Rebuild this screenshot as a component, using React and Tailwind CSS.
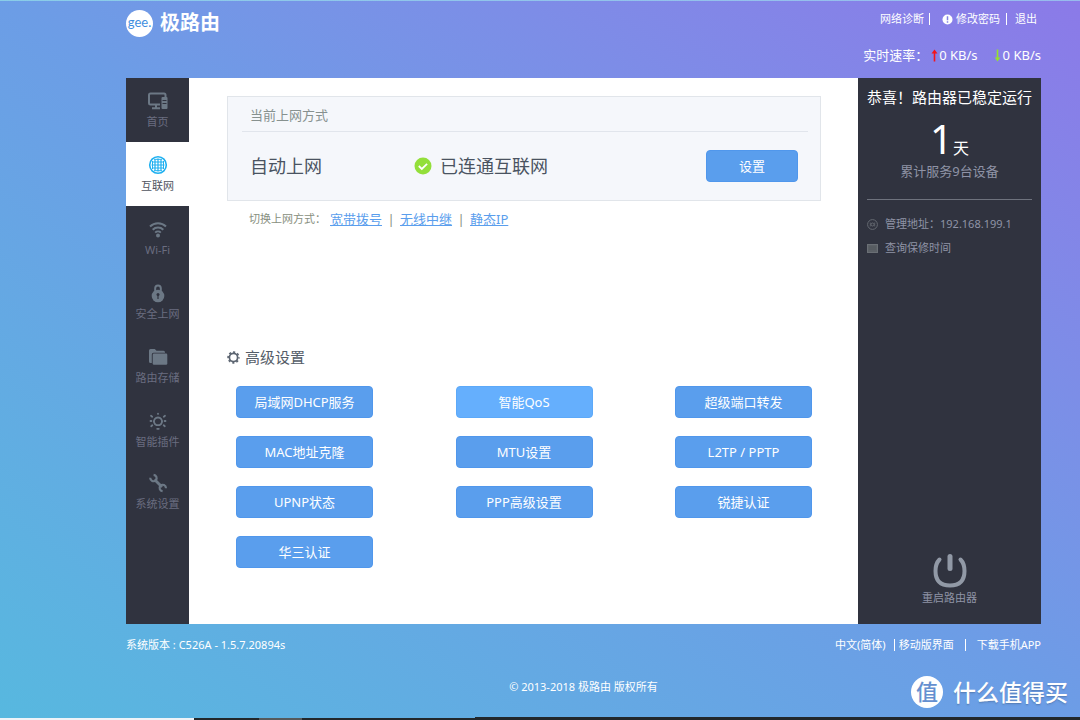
import React from "react";

function MonitorIcon() {
  return (
    <svg width="22" height="20" viewBox="0 0 22 20" fill="none" stroke="currentColor" strokeWidth="2">
      <path d="M13 13.5H3.5A1.500 1.500 0 0 1 2 12V4a1.500 1.500 0 0 1 1.500-1.500H17A1.500 1.500 0 0 1 18.500 4v2" />
      <path d="M9 13.500V17M5 17.200h8" />
      <rect x="14.500" y="6" width="6" height="12" rx="1" fill="currentColor" stroke="none" />
      <path d="M15.500 9.500h4M15.500 12.500h4" stroke="#30333f" strokeWidth="1" />
    </svg>
  );
}

function GlobeIcon() {
  return (
    <svg width="20" height="20" viewBox="0 0 20 20" fill="none" stroke="currentColor">
      <circle cx="10" cy="10" r="8.300" strokeWidth="1.600" />
      <path d="M10 3.500v13M3.500 10h13M4.500 7h11M4.500 13h11M7 4.500v11M13 4.500v11" strokeWidth="1.200" />
      <path d="M4.500 6v8M15.500 6v8M6 4.300h8M6 15.700h8" strokeWidth="1" />
    </svg>
  );
}

function WifiIcon() {
  return (
    <svg width="20" height="20" viewBox="0 0 20 20" fill="none" stroke="currentColor" strokeWidth="2">
      <path d="M2 7.500a11.500 11.500 0 0 1 16 0" />
      <path d="M4.700 10.700a7.600 7.600 0 0 1 10.600 0" />
      <path d="M7.200 13.600a4 4 0 0 1 5.600 0" />
      <circle cx="10" cy="16.500" r="2" fill="currentColor" stroke="none" />
    </svg>
  );
}

function LockIcon() {
  return (
    <svg width="20" height="20" viewBox="0 0 20 20" fill="none">
      <path d="M7.200 9V5.300a2.800 2.800 0 0 1 5.600 0V9" stroke="currentColor" strokeWidth="2" />
      <circle cx="10" cy="13" r="6.300" fill="currentColor" />
      <circle cx="10" cy="11.500" r="1.500" fill="#30333f" />
      <path d="M9.400 11.500h1.200v4.400H9.400z" fill="#30333f" />
    </svg>
  );
}

function FoldersIcon() {
  return (
    <svg width="20" height="20" viewBox="0 0 20 20" fill="currentColor">
      <path d="M1 3.500A1.500 1.500 0 0 1 2.500 2h4.300l1.700 1.800h7A1.500 1.500 0 0 1 17 5.300v.4H5.500A1.700 1.700 0 0 0 3.800 7.400V16H2.500A1.500 1.500 0 0 1 1 14.500z" />
      <rect x="4.700" y="6.600" width="14.600" height="11.200" rx="1.300" />
    </svg>
  );
}

function BulbIcon() {
  return (
    <svg width="20" height="20" viewBox="0 0 20 20" fill="none" stroke="currentColor" strokeWidth="1.800" strokeLinecap="round">
      <path d="M8.500 14.200a4 4 0 1 1 3 0z" />
      <path d="M9.200 17.800h1.600M10 2.600v.3M3 4.800l1.200.9M17 4.800l-1.200.9M2.500 10h.9M17.500 10h-.9M3.200 15.200l1.100-.9M16.800 15.200l-1.100-.9" />
    </svg>
  );
}

function WrenchIcon() {
  return (
    <svg width="20" height="20" viewBox="0 0 20 20" fill="none" stroke="currentColor">
      <path d="M6.500 6.500l7.500 7.500" strokeWidth="2.800" />
      <path d="M2.200 4.800a3.400 3.400 0 0 0 5.600 2.600A3.400 3.400 0 0 0 5.600 1.800" strokeWidth="2.200" />
      <path d="M18 15.200a3.400 3.400 0 0 0-5.600-2.600a3.400 3.400 0 0 0 2.200 5.600" strokeWidth="2.200" />
    </svg>
  );
}

function GearIcon() {
  return (
    <svg width="13" height="13" viewBox="0 0 13 13" fill="none" stroke="#5b6470">
      <circle cx="6.500" cy="6.500" r="4.100" strokeWidth="1.700" />
      <circle cx="6.500" cy="6.500" r="5.400" strokeWidth="1.600" strokeDasharray="2.120 2.120" strokeDashoffset="1.060" />
    </svg>
  );
}

function AlertIcon() {
  return (
    <svg width="11" height="11" viewBox="0 0 11 11">
      <circle cx="5.500" cy="5.500" r="5" fill="#fff" />
      <path d="M5.500 2.300v3.900M5.500 7.300v1.400" stroke="#7f80e4" strokeWidth="1.500" />
    </svg>
  );
}

function ArrowUp() {
  return (
    <svg width="7" height="13" viewBox="0 0 7 13">
      <path d="M3.500 0.500L6.500 4.500H4.300V12.500H2.700V4.500H0.500z" fill="#f5131b" />
    </svg>
  );
}

function ArrowDown() {
  return (
    <svg width="7" height="13" viewBox="0 0 7 13">
      <path d="M3.500 12.500L0.700 8.500H2.700V0.500H4.300V8.500H6.300z" fill="#95e02f" />
    </svg>
  );
}

const NAV = [
  { label: "首页", Icon: MonitorIcon },
  { label: "互联网", Icon: GlobeIcon, active: true },
  { label: "Wi-Fi", Icon: WifiIcon },
  { label: "安全上网", Icon: LockIcon },
  { label: "路由存储", Icon: FoldersIcon },
  { label: "智能插件", Icon: BulbIcon },
  { label: "系统设置", Icon: WrenchIcon },
];

const ADVANCED = [
  "局域网DHCP服务",
  "智能QoS",
  "超级端口转发",
  "MAC地址克隆",
  "MTU设置",
  "L2TP / PPTP",
  "UPNP状态",
  "PPP高级设置",
  "锐捷认证",
  "华三认证",
];

function Header() {
  return (
    <header className="flex h-[77px] justify-between pt-2 text-white">
      <a href="#home" className="flex h-7 items-center gap-[7px]">
        <span className="flex size-[27px] items-center justify-center rounded-full bg-white pb-0.5 font-['Lato'] text-[13px] leading-3 text-[#3f8fe0]">
          gee.
        </span>
        <span className="text-xl leading-7 font-bold">极路由</span>
      </a>
      <div className="flex flex-col items-end gap-4">
        <nav className="flex h-5 items-center pr-1 text-[11px] leading-5">
          <a href="#diagnose">网络诊断</a>
          <span className="ml-[5px] h-3 w-px bg-white" />
          <a href="#password" className="ml-3 flex items-center gap-[3px]">
            <AlertIcon />
            修改密码
          </a>
          <span className="ml-[6px] h-3 w-px bg-white" />
          <a href="#logout" className="ml-2">退出</a>
        </nav>
        <div className="flex h-5 items-center text-[13px] leading-5">
          <span>实时速率：</span>
          <span className="ml-[3px] flex items-center gap-px">
            <ArrowUp />0 KB/s
          </span>
          <span className="ml-4 flex items-center gap-0.5">
            <ArrowDown />0 KB/s
          </span>
        </div>
      </div>
    </header>
  );
}

function Sidebar() {
  return (
    <nav className="w-[63px] shrink-0 bg-[#30333f]">
      <ul>
        {NAV.map(({ label, Icon, active }) => (
          <li key={label} className="h-16 nth-[n+6]:h-[62px]">
            <a
              href="#nav"
              className={
                active
                  ? "flex h-full flex-col items-center bg-white pt-[13px] text-[#1fb0f0]"
                  : "flex h-full flex-col items-center pt-[13px] text-[#6c7885]"
              }
            >
              <Icon />
              <span
                className={
                  active
                    ? "mt-[3px] text-[11px] leading-4 text-[#50555f]"
                    : "mt-[3px] text-[11px] leading-4 text-[#6a6d80]"
                }
              >
                {label}
              </span>
            </a>
          </li>
        ))}
      </ul>
    </nav>
  );
}

function Content() {
  return (
    <main className="min-w-0 flex-1 bg-white pt-[18px] pr-[37px] pl-[38px]">
      <section className="border border-[#e1e5ea] bg-[#f5f7fb] pr-3 pb-[18px] pl-[14px]">
        <h2 className="border-b border-[#e1e5ec] px-2 pt-2 pb-[6px] text-[13px] leading-5 text-[#87918f]">
          当前上网方式
        </h2>
        <div className="flex items-center pt-[18px] pr-[10px] pl-2 text-lg leading-8 text-[#4a5361]">
          <span className="w-[164px]">自动上网</span>
          <span className="flex items-center gap-2">
            <svg width="18" height="18" viewBox="0 0 18 18" fill="none">
              <circle cx="9" cy="9" r="8.500" fill="#93df3a" />
              <path d="M4.800 9l3 2.900 5.300-5" stroke="#fff" strokeWidth="1.800" />
            </svg>
            已连通互联网
          </span>
          <button className="ml-auto h-8 w-[92px] rounded border border-[#5097ec] bg-[#5a9eed] text-[13px] leading-5 text-white">
            设置
          </button>
        </div>
      </section>
      <div className="mt-2 flex h-5 items-center pl-[22px] text-[13px] leading-5 text-[#888f80]">
        <span className="mr-1 text-[11px]">切换上网方式：</span>
        <a href="#pppoe" className="text-[#5a9eed] underline">宽带拨号</a>
        <span className="w-[18px] text-center">|</span>
        <a href="#relay" className="text-[#5a9eed] underline">无线中继</a>
        <span className="w-[18px] text-center">|</span>
        <a href="#static" className="text-[#5a9eed] underline">静态IP</a>
      </div>
      <section className="pt-[116px]">
        <h2 className="flex items-center gap-[5px] text-[15px] leading-6 text-[#555d68]">
          <GearIcon />
          高级设置
        </h2>
        <div className="grid grid-cols-[repeat(3,137px)] justify-between gap-y-[18px] px-[9px] pt-[17px] pb-14">
          {ADVANCED.map((name) => (
            <button
              key={name}
              className={
                name === "智能QoS"
                  ? "h-8 rounded border border-[#5ca9f9] bg-[#65affd] text-[13px] leading-5 text-white"
                  : "h-8 rounded border border-[#5097ec] bg-[#5a9eed] text-[13px] leading-5 text-white"
              }
            >
              {name}
            </button>
          ))}
        </div>
      </section>
    </main>
  );
}

function StatusPanel() {
  return (
    <aside className="flex w-[183px] shrink-0 flex-col bg-[#30333f] px-[9px] pt-[9px] pb-4 text-[#8f93a6]">
      <h2 className="text-center text-[15px] leading-5 whitespace-nowrap text-white">恭喜！路由器已稳定运行</h2>
      <p className="mt-2 flex items-baseline justify-center text-white">
        <span className="text-[40px] leading-12">1</span>
        <span className="text-base">天</span>
      </p>
      <p className="-mt-1 border-b border-[#6e727d] pb-4 text-center text-[13px] leading-6">累计服务9台设备</p>
      <ul className="pt-3 text-[11px] leading-6">
        <li className="flex items-center gap-[7px]">
          <svg width="11" height="11" viewBox="0 0 11 11" fill="none" stroke="#656a72">
            <circle cx="5.500" cy="5.500" r="4.900" />
            <circle cx="5.500" cy="5.500" r="1.500" />
            <path d="M3.300 3.500v4M7.700 3.500v4" strokeWidth="0.800" />
          </svg>
          管理地址：192.168.199.1
        </li>
        <li>
          <a href="#warranty" className="flex items-center gap-[7px]">
            <svg width="11" height="11" viewBox="0 0 11 11" fill="none">
              <rect x="0.500" y="1.500" width="10" height="8" fill="#5b6066" stroke="#6a6f75" />
              <path d="M2 4h7M2 6h7" stroke="#50555c" strokeWidth="0.800" />
            </svg>
            查询保修时间
          </a>
        </li>
      </ul>
      <button className="mt-auto flex flex-col items-center self-center text-[11px] leading-5">
        <svg width="36" height="36" viewBox="0 0 36 36" fill="none" stroke="#9199a6" strokeLinecap="round">
          <path d="M7.500 7.500C4.500 10.500 3.500 14 3.500 19c0 10 5 14.500 14.500 14.500S32.500 29 32.500 19c0-5-1-8.500-4-11.500" strokeWidth="4" />
          <path d="M18 4.500v12" strokeWidth="5" />
        </svg>
        重启路由器
      </button>
    </aside>
  );
}

export default function App() {
  return (
    <div className="relative flex min-h-screen flex-col border-t border-white/30 bg-linear-to-tr from-[#57b8df] via-[#6c9de6] to-[#8b7ae8] font-['Noto_Sans','Noto_Sans_CJK_SC',sans-serif]">
      <div className="flex-1 pr-[39px] pl-[126px]">
        <Header />
        <div className="flex">
          <Sidebar />
          <Content />
          <StatusPanel />
        </div>
        <footer className="pt-[11px] text-[11px] leading-5 text-white">
          <div className="flex justify-between">
            <span>系统版本 : C526A - 1.5.7.20894s</span>
            <nav className="flex items-center">
              <a href="#lang">中文(简体)</a>
              <span className="mr-1 ml-2 h-3 w-px bg-white" />
              <a href="#mobile">移动版界面</a>
              <span className="mx-[11px] h-3 w-px bg-white" />
              <a href="#app">下载手机APP</a>
            </nav>
          </div>
          <p className="mt-[22px] text-center">© 2013-2018 极路由 版权所有</p>
        </footer>
      </div>
      <div className="absolute right-3 bottom-3 flex items-center gap-[10px] text-white">
        <span className="flex size-8 items-center justify-center rounded-full bg-white pb-0.5 text-[22px] leading-none font-medium text-[#6590d0]">
          值
        </span>
        <span className="text-[23px] leading-8 font-medium text-shadow-sm">什么值得买</span>
      </div>
      <div className="flex h-[3px] items-end">
        <div className="h-0.5 w-[18%] bg-[#eef3f8]" />
        <div className="h-0.5 w-[6%] bg-[#22282c]" />
        <div className="h-0.5 w-[4%] bg-[#555a5c]" />
        <div className="h-0.5 w-[16%] bg-[#22282c]" />
        <div className="h-[3px] flex-1 bg-[#22282c]" />
      </div>
    </div>
  );
}
